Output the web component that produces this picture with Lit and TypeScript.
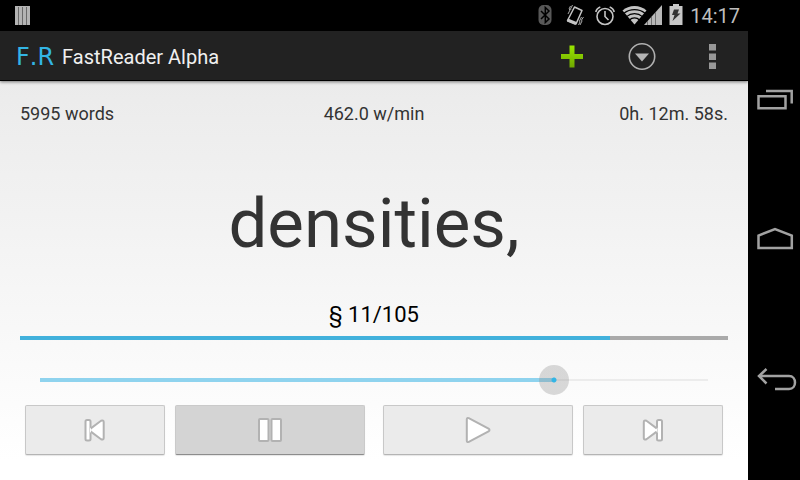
import { LitElement, html, css, svg } from "lit";
import { customElement, property, state } from "lit/decorators.js";

@customElement("status-bar")
export class StatusBar extends LitElement {
  @property() time = "";

  static styles = css`
    :host {
      display: flex;
      align-items: center;
      height: 31px;
      padding: 0 8px 0 15px;
      background: #000;
      color: #bebebe;
      font: 20px/32px Roboto, sans-serif;
    }
    svg {
      display: block;
      height: 31px;
      flex: none;
    }
    .system {
      display: flex;
      gap: 6px;
      margin-left: auto;
    }
  `;

  render() {
    return html`
      <svg width="15" viewBox="0 0 15 31" aria-hidden="true">
        <path fill="#b4b4b4" d="M0 6h15v19H0z" />
        <path stroke="#6a6a6a" d="M3.5 7v18M7.5 7v18M11.5 7v18" />
      </svg>
      <div class="system">
        <svg width="22" viewBox="537 0 22 31" role="img" aria-label="Bluetooth">
          <rect x="539.5" y="5" width="13" height="20" rx="5" fill="#585858" />
          <path fill="none" stroke="#000" stroke-width="1.5" d="M542 11l8 8-3.7 3.500V7.500L550 11l-8 8" />
        </svg>
        <svg width="24" viewBox="565 0 24 31" role="img" aria-label="Vibrate">
          <path fill="none" stroke="#c4c4c4" stroke-width="1.500" stroke-linejoin="round" d="M575.500 7l7.500 3.500-6 13.500-8.500-3.500z" />
          <path fill="none" stroke="#a8a8a8" stroke-width="1" d="M571.500 6l-1.500 3 1 1-2 4M573.500 5l-2 4 .5 1M584.500 17l-2 3 .5 1-2 4M582.500 17l-2 4 .5 1-1.500 3" />
          <path stroke="#c4c4c4" stroke-width="3" d="M568.500 20l8.500 3.500" />
        </svg>
        <svg width="22" viewBox="595 0 22 31" role="img" aria-label="Alarm">
          <g fill="none" stroke="#c4c4c4" stroke-width="1.600">
            <circle cx="606" cy="16.500" r="8" />
            <path d="M606 11v5.500l3.500 3.500M596.800 12q.7-3.700 4.500-5M615.200 12q-.7-3.700-4.500-5" />
          </g>
        </svg>
        <svg width="40" viewBox="623 0 40 31" role="img" aria-label="Wi-Fi and mobile signal">
          <path fill="#c4c4c4" d="M635.500 24.500L623.500 10.500Q628.500 6 635.500 6t12 4.500z" />
          <path fill="none" stroke="#000" stroke-width="1.200" d="M625 13.200Q629.500 9.600 635.500 9.600t10.500 3.600M627.500 16.600q3.500-3 8-3t8 3M630.500 20q2-2.200 5-2.200t5 2.200" />
          <path fill="#b8b8b8" d="M645 25L663 5v20z" />
          <path stroke="#666" d="M648.500 21v4M652.500 17v8M656.500 12v13" stroke-width=".9" />
        </svg>
        <svg width="16" viewBox="669 0 16 31" role="img" aria-label="Battery charging">
          <path fill="#c8c8c8" d="M674 4h6v2h3.500v19h-13V6h3.500z" />
          <path fill="#333" d="M675 9.500h5l-1.500 4h3l-8 7.500 2-6H673z" />
        </svg>
        <time>${this.time}</time>
      </div>
    `;
  }
}

@customElement("action-bar")
export class ActionBar extends LitElement {
  @property() heading = "";

  static styles = css`
    :host {
      display: flex;
      align-items: center;
      box-sizing: border-box;
      height: 50px;
      padding: 0 1px 0 16px;
      background: #222;
      border-bottom: 1px solid #000;
      box-shadow: 0 1px 3px rgba(0, 0, 0, 0.5);
      position: relative;
    }
    .logo {
      color: #33b5e5;
      font: 24px/32px "DejaVu Sans", sans-serif;
      font-kerning: none;
      padding-top: 2px;
    }
    h1 {
      margin: 0 0 0 8px;
      padding-top: 2px;
      color: #f0f0f0;
      font: 20px/32px Roboto, sans-serif;
    }
    .actions {
      display: flex;
      margin-left: auto;
    }
    button {
      width: 70px;
      height: 48px;
      padding: 0;
      border: 0;
      background: none;
    }
    svg {
      display: block;
      margin: auto;
    }
  `;

  render() {
    return html`
      <span class="logo">F.R</span>
      <h1>${this.heading}</h1>
      <div class="actions">
        <button aria-label="Add">
          <svg width="28" height="28" viewBox="0 0 28 28">
            <defs>
              <linearGradient id="leaf" x1="0" y1="0" x2="0" y2="1">
                <stop offset="0" stop-color="#99e600" />
                <stop offset="1" stop-color="#6fa800" />
              </linearGradient>
            </defs>
            <path fill="url(#leaf)" d="M11.500 3.500h5V12h8.500v5h-8.500v8.500h-5V17H3v-5h8.500z" />
          </svg>
        </button>
        <button aria-label="Open list">
          <svg width="28" height="28" viewBox="0 0 28 28">
            <circle cx="14" cy="14.500" r="12.700" fill="none" stroke="#b0b0b0" stroke-width="1.600" />
            <path fill="#b4b4b4" d="M7 11.500h14l-7 8z" />
          </svg>
        </button>
        <button aria-label="More options">
          <svg width="28" height="28" viewBox="0 0 28 28">
            <path fill="#989898" d="M11 2h7v6.500h-7zM11 11.500h7V18h-7zM11 20.500h7V27h-7z" />
          </svg>
        </button>
      </div>
    `;
  }
}

@customElement("nav-bar")
export class NavBar extends LitElement {
  static styles = css`
    :host {
      display: flex;
      flex-direction: column;
      box-sizing: border-box;
      padding: 29px 0 31px;
      background: #000;
    }
    button {
      flex: 1;
      width: 100%;
      padding: 0;
      border: 0;
      background: none;
    }
    svg {
      display: block;
      width: 52px;
      height: 28px;
      margin: auto;
      fill: none;
      stroke: #a2a2a2;
      stroke-width: 2.500;
    }
  `;

  render() {
    return html`
      <button aria-label="Recent apps">
        <svg viewBox="0 0 52 28"><path d="M10.500 11.200h27v12h-27zM18 6h25.700v12.500" /></svg>
      </button>
      <button aria-label="Home">
        <svg viewBox="0 0 52 28"><path d="M10.500 23V10.500L27 4l16.800 6.500V23z" /></svg>
      </button>
      <button aria-label="Back">
        <svg viewBox="0 0 52 28"><path d="M11 11h30c8 0 8 13 0 13H27M18.500 4L11 11l7.500 7.500" /></svg>
      </button>
    `;
  }
}

const glyphs = {
  previous: svg`<path d="M8.500 12.600L19 4.800q2.700-1 2.700 1.200v16q0 2.200-2.700 1.200L8.500 15.400z" /><rect x="3.500" y="4" width="5" height="20.500" rx="1.500" /><path class="inner" d="M8 11.500v5.500l2-3z" />`,
  pause: svg`<rect x="2" y="3" width="9.500" height="22" rx="1" /><rect x="14.500" y="3" width="9.500" height="22" rx="1" />`,
  play: svg`<path d="M1.800 3.500q0-2.200 2-1.300L23.500 12.500q2 1.500 0 3L3.800 25.800q-2 1-2-1.300z" />`,
  next: svg`<path d="M17 12.600L6.500 4.800Q3.800 3.800 3.800 6v16q0 2.200 2.700 1.200l10.500-7.800z" /><rect x="17" y="4" width="5" height="20.500" rx="1.500" /><path class="inner" d="M17.500 11.500v5.500l-2-3z" />`,
};

@customElement("app-root")
export class AppRoot extends LitElement {
  @state() private speed = 769;
  @state() private playing = false;

  static styles = css`
    :host {
      display: grid;
      grid-template-columns: 1fr 52px;
      min-height: 100vh;
      font-family: Roboto, sans-serif;
    }
    .app {
      display: flex;
      flex-direction: column;
    }
    main {
      flex: 1;
      display: flex;
      flex-direction: column;
      padding: 20px 20px 25px;
      background: linear-gradient(#ebebeb, #fff 95%);
    }
    .stats {
      display: grid;
      grid-template-columns: 1fr 1fr 1fr;
      color: #333;
      font-size: 18px;
      line-height: 26px;
    }
    .stats :nth-child(2) {
      text-align: center;
    }
    .stats :nth-child(3) {
      text-align: right;
    }
    .word {
      flex: 1;
      display: flex;
      align-items: center;
      justify-content: center;
      margin: 0;
      padding-top: 20px;
      color: #333;
      font-size: 69px;
      line-height: 84px;
    }
    .section {
      margin: 0 0 7px;
      color: #000;
      text-align: center;
      font-size: 22px;
      line-height: 28px;
    }
    .progress {
      height: 4px;
      background: #aaa;
    }
    .done {
      height: 100%;
      background: #42b1dc;
    }
    input {
      appearance: none;
      height: 30px;
      margin: 25px 5px 10px;
      background: none;
    }
    input::-webkit-slider-runnable-track {
      height: 30px;
      background:
        linear-gradient(#8fd3ee, #8fd3ee) 15px 13px / calc((100% - 30px) * var(--level)) 4px no-repeat,
        linear-gradient(#ececec, #ececec) 15px 14px / calc(100% - 30px) 2px no-repeat;
    }
    input::-webkit-slider-thumb {
      appearance: none;
      width: 30px;
      height: 30px;
      border-radius: 50%;
      background: radial-gradient(circle, #33b5e5 2px, rgba(140, 140, 140, 0.32) 3px);
    }
    .controls {
      display: grid;
      grid-template-columns: 1fr 1fr;
      gap: 18px;
      margin: 0 5px;
    }
    .pair {
      display: grid;
      grid-template-columns: 14fr 19fr;
      gap: 10px;
    }
    .pair.end {
      grid-template-columns: 19fr 14fr;
    }
    .controls button {
      height: 50px;
      padding: 0;
      border: 1px solid #c8c8c8;
      border-bottom-color: #b4b4b4;
      border-radius: 2px;
      background: #ebebeb;
      box-shadow: 0 1px 1px rgba(0, 0, 0, 0.1);
    }
    .controls button.pressed {
      border-color: #cacaca;
      border-bottom-color: #8c8c8c;
      background: #d4d4d4;
    }
    .controls svg {
      display: block;
      margin: auto;
      fill: #fff;
      stroke: #b2b2b2;
      stroke-width: 2;
    }
    .controls .inner {
      stroke: none;
    }
  `;

  private control(name: keyof typeof glyphs, label: string, pressed = false, action = () => {}) {
    return html`
      <button class=${pressed ? "pressed" : ""} aria-label=${label} @click=${action}>
        <svg width="26" height="28" viewBox="0 0 26 28">${glyphs[name]}</svg>
      </button>
    `;
  }

  render() {
    return html`
      <div class="app">
        <status-bar time="14:17"></status-bar>
        <action-bar heading="FastReader Alpha"></action-bar>
        <main>
          <div class="stats">
            <span>5995 words</span>
            <span>462.0 w/min</span>
            <span>0h. 12m. 58s.</span>
          </div>
          <p class="word">densities,</p>
          <p class="section">§ 11/105</p>
          <div class="progress" role="progressbar" aria-label="Text read" aria-valuenow="83">
            <div class="done" style="width: 83.4%"></div>
          </div>
          <input
            type="range"
            aria-label="Reading speed"
            min="0"
            max="1000"
            .value=${String(this.speed)}
            style="--level: ${this.speed / 1000}"
            @input=${(e: Event) => (this.speed = Number((e.target as HTMLInputElement).value))}
          />
          <div class="controls">
            <div class="pair">
              ${this.control("previous", "Previous")}
              ${this.control("pause", "Pause", !this.playing, () => (this.playing = false))}
            </div>
            <div class="pair end">
              ${this.control("play", "Play", this.playing, () => (this.playing = true))}
              ${this.control("next", "Next")}
            </div>
          </div>
        </main>
      </div>
      <nav-bar></nav-bar>
    `;
  }
}
